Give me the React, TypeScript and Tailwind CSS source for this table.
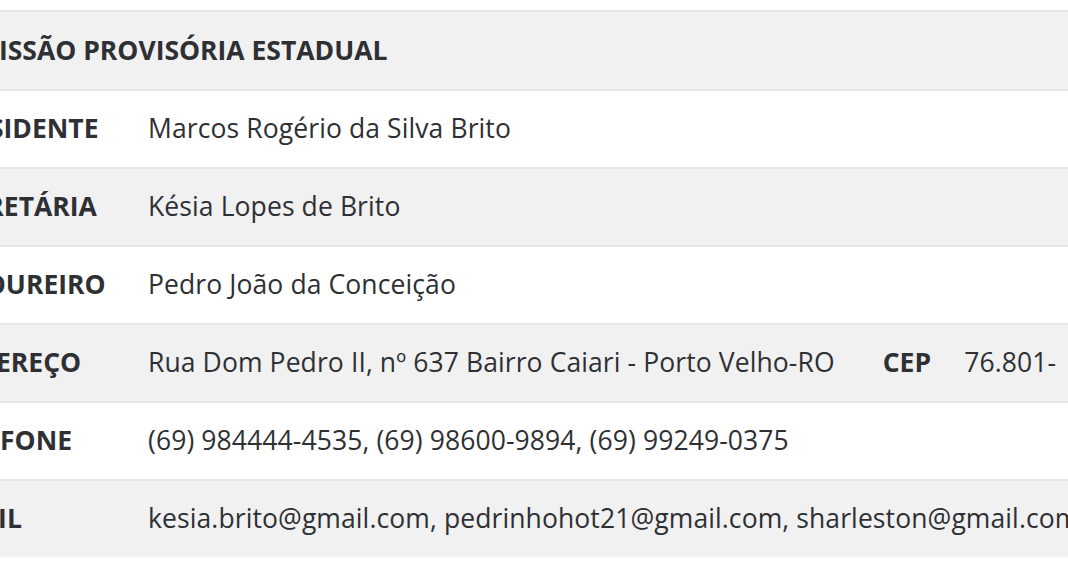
import React from "react";

const rows: { label: string; value: React.ReactNode; bg: string }[] = [
  { label: "PRESIDENTE", value: "Marcos Rogério da Silva Brito", bg: "bg-white" },
  { label: "SECRETÁRIA", value: "Késia Lopes de Brito", bg: "bg-[#f1f1f1]" },
  { label: "TESOUREIRO", value: "Pedro João da Conceição", bg: "bg-white" },
  {
    label: "ENDEREÇO",
    value: (
      <span className="flex whitespace-nowrap">
        <span>Rua Dom Pedro II, nº 637 Bairro Caiari - Porto Velho-RO</span>
        <span className="ml-[48px] font-bold">CEP</span>
        <span className="ml-[33px]">76.801-</span>
      </span>
    ),
    bg: "bg-[#f1f1f1]",
  },
  { label: "TELEFONE", value: "(69) 984444-4535, (69) 98600-9894, (69) 99249-0375", bg: "bg-white" },
  {
    label: "EMAIL",
    value: "kesia.brito@gmail.com, pedrinhohot21@gmail.com, sharleston@gmail.com",
    bg: "bg-[#f1f1f1]",
  },
];

export default function App() {
  return (
    <div
      className="w-[1068px] h-[580px] overflow-hidden bg-white text-[#2e3034] text-[26.5px]"
      style={{ fontFamily: '"Open Sans", sans-serif' }}
    >
      <div className="pt-[10px] ml-[-72px] w-[1300px]">
        <div className="flex items-center h-[79px] bg-[#f1f1f1] border-t-2 border-[#e3e6ea] pl-[8px] font-bold whitespace-nowrap">
          COMISSÃO PROVISÓRIA ESTADUAL
        </div>
        {rows.map((r) => (
          <div
            key={r.label}
            className={`flex items-center h-[78px] border-t-2 border-[#e3e6ea] ${r.bg} whitespace-nowrap`}
          >
            <div className="w-[220px] shrink-0 pl-[12px] font-bold">{r.label}</div>
            <div className="tracking-[0.1px]">{r.value}</div>
          </div>
        ))}
      </div>
    </div>
  );
}
